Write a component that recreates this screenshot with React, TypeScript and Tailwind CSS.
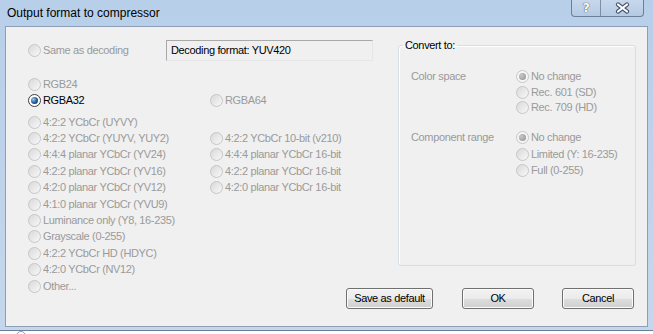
import React from "react";

type Item = { label: string; checked?: boolean; disabled?: boolean };

function Radio({ checked, disabled }: { checked?: boolean; disabled?: boolean }) {
  if (!disabled) {
    return (
      <span className="flex h-[13px] w-[13px] shrink-0 items-center justify-center rounded-full border border-[#3c3c3c] bg-white">
        <span className="h-[7px] w-[7px] rounded-full bg-[radial-gradient(circle_at_35%_35%,#9ccaf0,#1f5692_55%,#0c2849)]" />
      </span>
    );
  }
  return (
    <span
      className={`flex h-[13px] w-[13px] shrink-0 items-center justify-center rounded-full border border-[#c6c6c6] ${
        checked ? "bg-[#f6f6f6]" : "bg-gradient-to-br from-[#d9d9d9] to-[#f8f8f8]"
      }`}
    >
      {checked && <span className="h-[7px] w-[7px] rounded-full bg-[radial-gradient(circle_at_35%_35%,#c8c8c8,#8f8f8f)]" />}
    </span>
  );
}

function Option({ label, checked, disabled = true, h = "h-[16.4px]", gap = "ml-[2px]" }: Item & { h?: string; gap?: string }) {
  return (
    <div className={`flex ${h} items-center`}>
      <Radio checked={checked} disabled={disabled} />
      <span className={`${gap} whitespace-nowrap ${disabled ? "text-[#9a9a9a]" : "text-black"}`}>{label}</span>
    </div>
  );
}

function Button({ label, w }: { label: string; w: string }) {
  return (
    <button
      type="button"
      className={`${w} h-[21px] rounded-[3px] border border-[#707070] bg-[linear-gradient(#f2f2f2_0%,#ebebeb_50%,#dddddd_51%,#cfcfcf_100%)] text-black shadow-[inset_0_0_0_1px_#fbfbfb]`}
    >
      {label}
    </button>
  );
}

const formats: [string, string?][] = [
  ["4:2:2 YCbCr (UYVY)"],
  ["4:2:2 YCbCr (YUYV, YUY2)", "4:2:2 YCbCr 10-bit (v210)"],
  ["4:4:4 planar YCbCr (YV24)", "4:4:4 planar YCbCr 16-bit"],
  ["4:2:2 planar YCbCr (YV16)", "4:2:2 planar YCbCr 16-bit"],
  ["4:2:0 planar YCbCr (YV12)", "4:2:0 planar YCbCr 16-bit"],
  ["4:1:0 planar YCbCr (YVU9)"],
  ["Luminance only (Y8, 16-235)"],
  ["Grayscale (0-255)"],
  ["4:2:2 YCbCr HD (HDYC)"],
  ["4:2:0 YCbCr (NV12)"],
  ["Other..."],
];

export default function App() {
  return (
    <div className="h-[334px] w-[653px] overflow-hidden bg-gradient-to-b from-[#b8cfe9] to-[#c4d7ec] font-['Liberation_Sans',sans-serif] text-[11px] leading-[13px] tracking-[-0.35px]">
      {/* title bar */}
      <div className="flex h-[26px] items-start">
        <span className="pl-[7px] pt-[5px] text-[12px] leading-[16px] tracking-normal text-black">
          Output format to compressor
        </span>
        <div className="mr-[9px] ml-auto flex h-[17px] overflow-hidden rounded-b-[4px] border border-t-0 border-[#6d7f98] bg-gradient-to-b from-[#c7d8ec] to-[#b4cae3]">
          <div className="flex w-[29px] items-center justify-center border-r border-[#7d8fa8] font-['DejaVu_Sans',sans-serif] text-[12px] font-bold text-white [text-shadow:0_0_1px_#3d4d63,0_0_1px_#3d4d63]">
            ?
          </div>
          <div className="flex w-[42px] items-center justify-center">
            <svg width="15" height="12" viewBox="0 0 15 12">
              <path d="M3 2.5 L12 9.5 M12 2.5 L3 9.5" stroke="#42526a" strokeWidth="4.2" strokeLinecap="round" />
              <path d="M3 2.5 L12 9.5 M12 2.5 L3 9.5" stroke="#fff" strokeWidth="2.2" strokeLinecap="round" />
            </svg>
          </div>
        </div>
      </div>

      {/* body */}
      <div className="flex h-[301px] px-[5px]">
        <div className="flex flex-1 border border-[#8e9fb5] bg-[#f0f0f0]">
          {/* left column */}
          <div className="w-[340px] shrink-0 pt-[13px] pl-[22px]">
            <div className="flex h-[21px] items-center">
              <div className="flex w-[138px] shrink-0 items-center">
                <Radio disabled />
                <span className="ml-[2px] text-[#9a9a9a]">Same as decoding</span>
              </div>
              <div className="flex h-[21px] w-[207px] shrink-0 items-center border border-[#a9a9a9] border-r-[#e6e6e6] border-b-[#e6e6e6] bg-[#f0f0f0] pl-[4px] text-black">
                Decoding format: YUV420
              </div>
            </div>

            <div className="mt-[15px]">
              <Option label="RGB24" h="h-[16px]" />
              <div className="flex">
                <div className="w-[182px] shrink-0">
                  <Option label="RGBA32" checked disabled={false} h="h-[16px]" />
                </div>
                <Option label="RGBA64" h="h-[16px]" />
              </div>
            </div>

            <div className="mt-[6px]">
              {formats.map(([a, b]) => (
                <div key={a} className="flex">
                  <div className="w-[182px] shrink-0">
                    <Option label={a} />
                  </div>
                  {b && <Option label={b} />}
                </div>
              ))}
            </div>
          </div>

          {/* right column */}
          <div className="flex w-[301px] flex-col">
            <fieldset className="mt-[12px] ml-[52px] h-[227px] w-[238px] rounded-[3px] border border-[#d5dfe5] pt-[17px] pl-[12px] shadow-[inset_1px_1px_0_#ffffff]">
              <legend className="-ml-[8px] px-[2px] text-black">Convert to:</legend>
              <div className="flex">
                <div className="flex h-[15.5px] w-[105px] shrink-0 items-center text-[#9a9a9a]">Color space</div>
                <div>
                  <Option label="No change" checked h="h-[15.5px]" />
                  <Option label="Rec. 601 (SD)" h="h-[15.5px]" />
                  <Option label="Rec. 709 (HD)" h="h-[15.5px]" />
                </div>
              </div>
              <div className="mt-[14px] flex">
                <div className="flex h-[16.5px] w-[105px] shrink-0 items-center text-[#9a9a9a]">Component range</div>
                <div>
                  <Option label="No change" checked h="h-[16.5px]" />
                  <Option label="Limited (Y: 16-235)" h="h-[16.5px]" />
                  <Option label="Full (0-255)" h="h-[16.5px]" />
                </div>
              </div>
            </fieldset>

            <div className="mt-[22px] flex">
              <Button label="Save as default" w="w-[87px]" />
              <div className="ml-[29px]">
                <Button label="OK" w="w-[72px]" />
              </div>
              <div className="ml-[28px]">
                <Button label="Cancel" w="w-[72px]" />
              </div>
            </div>
          </div>
        </div>
      </div>

      {/* bottom frame and window behind */}
      <div className="h-[3px]" />
      <div className="h-[4px] border-t border-[#6b7f99] bg-white pl-[16px]">
        <div className="h-[10px] w-[10px] rounded-full border border-[#9a9a9a]" />
      </div>
    </div>
  );
}
